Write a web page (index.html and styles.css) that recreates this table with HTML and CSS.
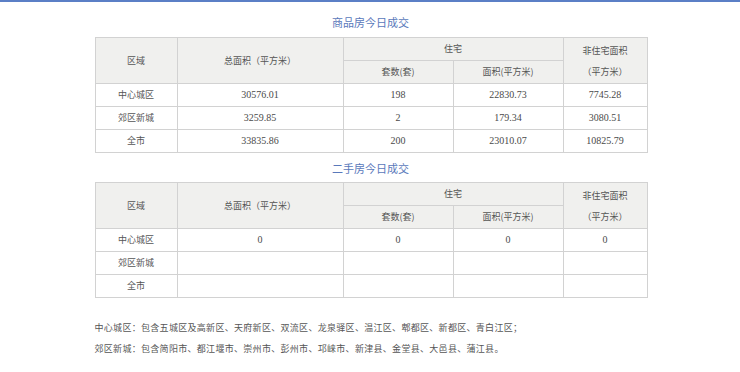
FILE: index.html
```html
<!DOCTYPE html>
<html lang="zh-CN">
<head>
<meta charset="utf-8">
<title>今日成交</title>
<link rel="stylesheet" href="styles.css">
</head>
<body>
<div class="topbar"></div>
<div class="wrap">
  <h2 class="title first">商品房今日成交</h2>
  <table class="data">
    <colgroup>
      <col class="c1"><col class="c2"><col class="c3"><col class="c4"><col class="c5">
    </colgroup>
    <thead>
      <tr>
        <th rowspan="2">区域</th>
        <th rowspan="2">总面积（平方米）</th>
        <th colspan="2">住宅</th>
        <th rowspan="2" class="two">非住宅面积<br>（平方米）</th>
      </tr>
      <tr>
        <th>套数(套)</th>
        <th>面积(平方米)</th>
      </tr>
    </thead>
    <tbody>
      <tr><td>中心城区</td><td class="num">30576.01</td><td class="num">198</td><td class="num">22830.73</td><td class="num">7745.28</td></tr>
      <tr><td>郊区新城</td><td class="num">3259.85</td><td class="num">2</td><td class="num">179.34</td><td class="num">3080.51</td></tr>
      <tr><td>全市</td><td class="num">33835.86</td><td class="num">200</td><td class="num">23010.07</td><td class="num">10825.79</td></tr>
    </tbody>
  </table>

  <h2 class="title second">二手房今日成交</h2>
  <table class="data">
    <colgroup>
      <col class="c1"><col class="c2"><col class="c3"><col class="c4"><col class="c5">
    </colgroup>
    <thead>
      <tr>
        <th rowspan="2">区域</th>
        <th rowspan="2">总面积（平方米）</th>
        <th colspan="2">住宅</th>
        <th rowspan="2" class="two">非住宅面积<br>（平方米）</th>
      </tr>
      <tr>
        <th>套数(套)</th>
        <th>面积(平方米)</th>
      </tr>
    </thead>
    <tbody>
      <tr><td>中心城区</td><td class="num">0</td><td class="num">0</td><td class="num">0</td><td class="num">0</td></tr>
      <tr><td>郊区新城</td><td></td><td></td><td></td><td></td></tr>
      <tr><td>全市</td><td></td><td></td><td></td><td></td></tr>
    </tbody>
  </table>

  <div class="notes">
    <p>中心城区：包含五城区及高新区、天府新区、双流区、龙泉驿区、温江区、郫都区、新都区、青白江区；</p>
    <p>郊区新城：包含简阳市、都江堰市、崇州市、彭州市、邛崃市、新津县、金堂县、大邑县、蒲江县。</p>
  </div>
</div>
</body>
</html>
```

FILE: styles.css
```css
html, body {
  margin: 0;
  padding: 0;
  background: #ffffff;
}
body {
  font-family: "Noto Sans CJK SC", "Noto Sans", sans-serif;
  color: #555555;
}
.topbar {
  height: 2px;
  background: #5b7fc6;
}
.wrap {
  width: 552px;
  margin: 0 auto;
  padding-left: 1px;
}
.title {
  margin: 0;
  font-size: 11px;
  line-height: 15px;
  font-weight: normal;
  color: #5a79bb;
  text-align: center;
}
.title.first {
  margin: 13px 0 7px;
}
.title.second {
  margin: 8px 0 6px;
}
.data {
  width: 552px;
  border-collapse: collapse;
  table-layout: fixed;
  font-size: 9px;
  color: #555555;
}
.c1 { width: 82px; }
.c2 { width: 166px; }
.c3 { width: 110px; }
.c4 { width: 110px; }
.c5 { width: 84px; }
.data th, .data td {
  border: 1px solid #d2d2d2;
  padding: 0;
  height: 22px;
  text-align: center;
  font-weight: normal;
  line-height: 12px;
}
.data th {
  background: #f0f0ee;
}
.data th.two {
  line-height: 21px;
}
.num {
  font-family: "Liberation Serif", serif;
  font-size: 10px;
  color: #4a4a4a;
}
.notes {
  margin-top: 19px;
  font-size: 9px;
  line-height: 21px;
  letter-spacing: 0.3px;
  color: #555555;
}
.notes p {
  margin: 0;
}
```
